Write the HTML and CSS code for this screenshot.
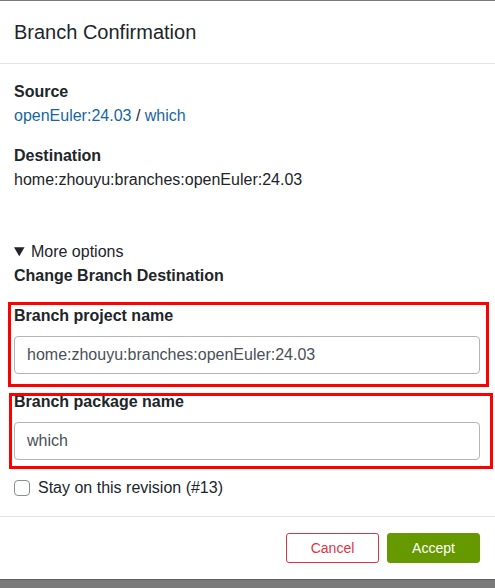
FILE: index.html
```html
<!DOCTYPE html>
<html lang="en">
<head>
<meta charset="utf-8">
<title>Branch Confirmation</title>
<link rel="stylesheet" href="styles.css">
</head>
<body>
<div class="modal">
  <div class="modal-header">
    <h5 class="modal-title">Branch Confirmation</h5>
  </div>
  <div class="modal-body">
    <dl class="info">
      <dt>Source</dt>
      <dd><a href="#">openEuler:24.03</a> / <a href="#">which</a></dd>
      <dt>Destination</dt>
      <dd>home:zhouyu:branches:openEuler:24.03</dd>
    </dl>
    <details class="more" open>
      <summary>More options</summary>
      <div class="section-title">Change Branch Destination</div>
      <div class="form-group">
        <label class="label" for="proj">Branch project name</label>
        <input class="form-control" id="proj" type="text" value="home:zhouyu:branches:openEuler:24.03">
      </div>
      <div class="form-group">
        <label class="label" for="pkg">Branch package name</label>
        <input class="form-control" id="pkg" type="text" value="which">
      </div>
    </details>
    <div class="check">
      <input type="checkbox" class="check-input" id="stay">
      <label for="stay">Stay on this revision (#13)</label>
    </div>
  </div>
  <div class="modal-footer">
    <button class="btn btn-cancel" type="button">Cancel</button>
    <button class="btn btn-accept" type="button">Accept</button>
  </div>
  <div class="highlight highlight-1"></div>
  <div class="highlight highlight-2"></div>
</div>
</body>
</html>
```

FILE: styles.css
```css
html {
  background: #7a7a7a;
}
body {
  margin: 0;
  font-family: "Liberation Sans", Arial, sans-serif;
  font-size: 16px;
  line-height: 24px;
  color: #212529;
}
.modal {
  position: relative;
  margin-top: 1px;
  background: #fff;
  border-bottom: 1px solid #5f5f5f;
}
.modal-header {
  padding: 16px 15px 16px 14px;
  border-bottom: 1px solid #e3e3e3;
}
.modal-title {
  margin: 0;
  font-size: 20px;
  line-height: 30px;
  font-weight: 400;
  color: #212529;
}
.modal-body {
  padding: 16px 15px 16px 14px;
}
.info {
  margin: 0 0 48px;
}
.info dt {
  font-weight: 700;
}
.info dd {
  margin: 0 0 16px;
}
.info dd:last-child {
  margin-bottom: 0;
}
.info a {
  color: #17679e;
  text-decoration: none;
}
.more summary {
  cursor: pointer;
}
.section-title {
  font-weight: 700;
  margin-bottom: 16px;
}
.form-group {
  margin-bottom: 16px;
}
.label {
  display: block;
  font-weight: 700;
  margin-bottom: 8px;
}
.form-control {
  display: block;
  box-sizing: border-box;
  width: 100%;
  height: 38px;
  margin: 0;
  padding: 6px 12px;
  font-family: inherit;
  font-size: 16px;
  line-height: 24px;
  color: #495057;
  background: #fff;
  border: 1px solid #b5b5b5;
  border-radius: 4px;
}
.check {
  display: flex;
  align-items: center;
  gap: 8px;
}
.check-input {
  appearance: none;
  -webkit-appearance: none;
  width: 16px;
  height: 16px;
  margin: 0;
  border: 1px solid #8a8f94;
  border-radius: 4px;
  background: #fff;
  flex: none;
}
.modal-footer {
  display: flex;
  justify-content: flex-end;
  gap: 8px;
  padding: 16px 15px 16px 14px;
  border-top: 1px solid #e3e3e3;
}
.btn {
  box-sizing: border-box;
  width: 93px;
  height: 30px;
  padding: 0;
  font-family: inherit;
  font-size: 14px;
  line-height: 20px;
  border-radius: 3px;
  border: 1px solid transparent;
}
.btn-cancel {
  color: #dc3545;
  background: #fff;
  border-color: #dc3545;
}
.btn-accept {
  color: #fff;
  background: #669900;
  border-color: #669900;
}
.highlight {
  position: absolute;
  border: 3px solid #ff0000;
  box-sizing: border-box;
  pointer-events: none;
}
.highlight-1 {
  left: 8px;
  top: 301px;
  width: 481px;
  height: 85px;
}
.highlight-2 {
  left: 9px;
  top: 392px;
  width: 484px;
  height: 76px;
}
```
